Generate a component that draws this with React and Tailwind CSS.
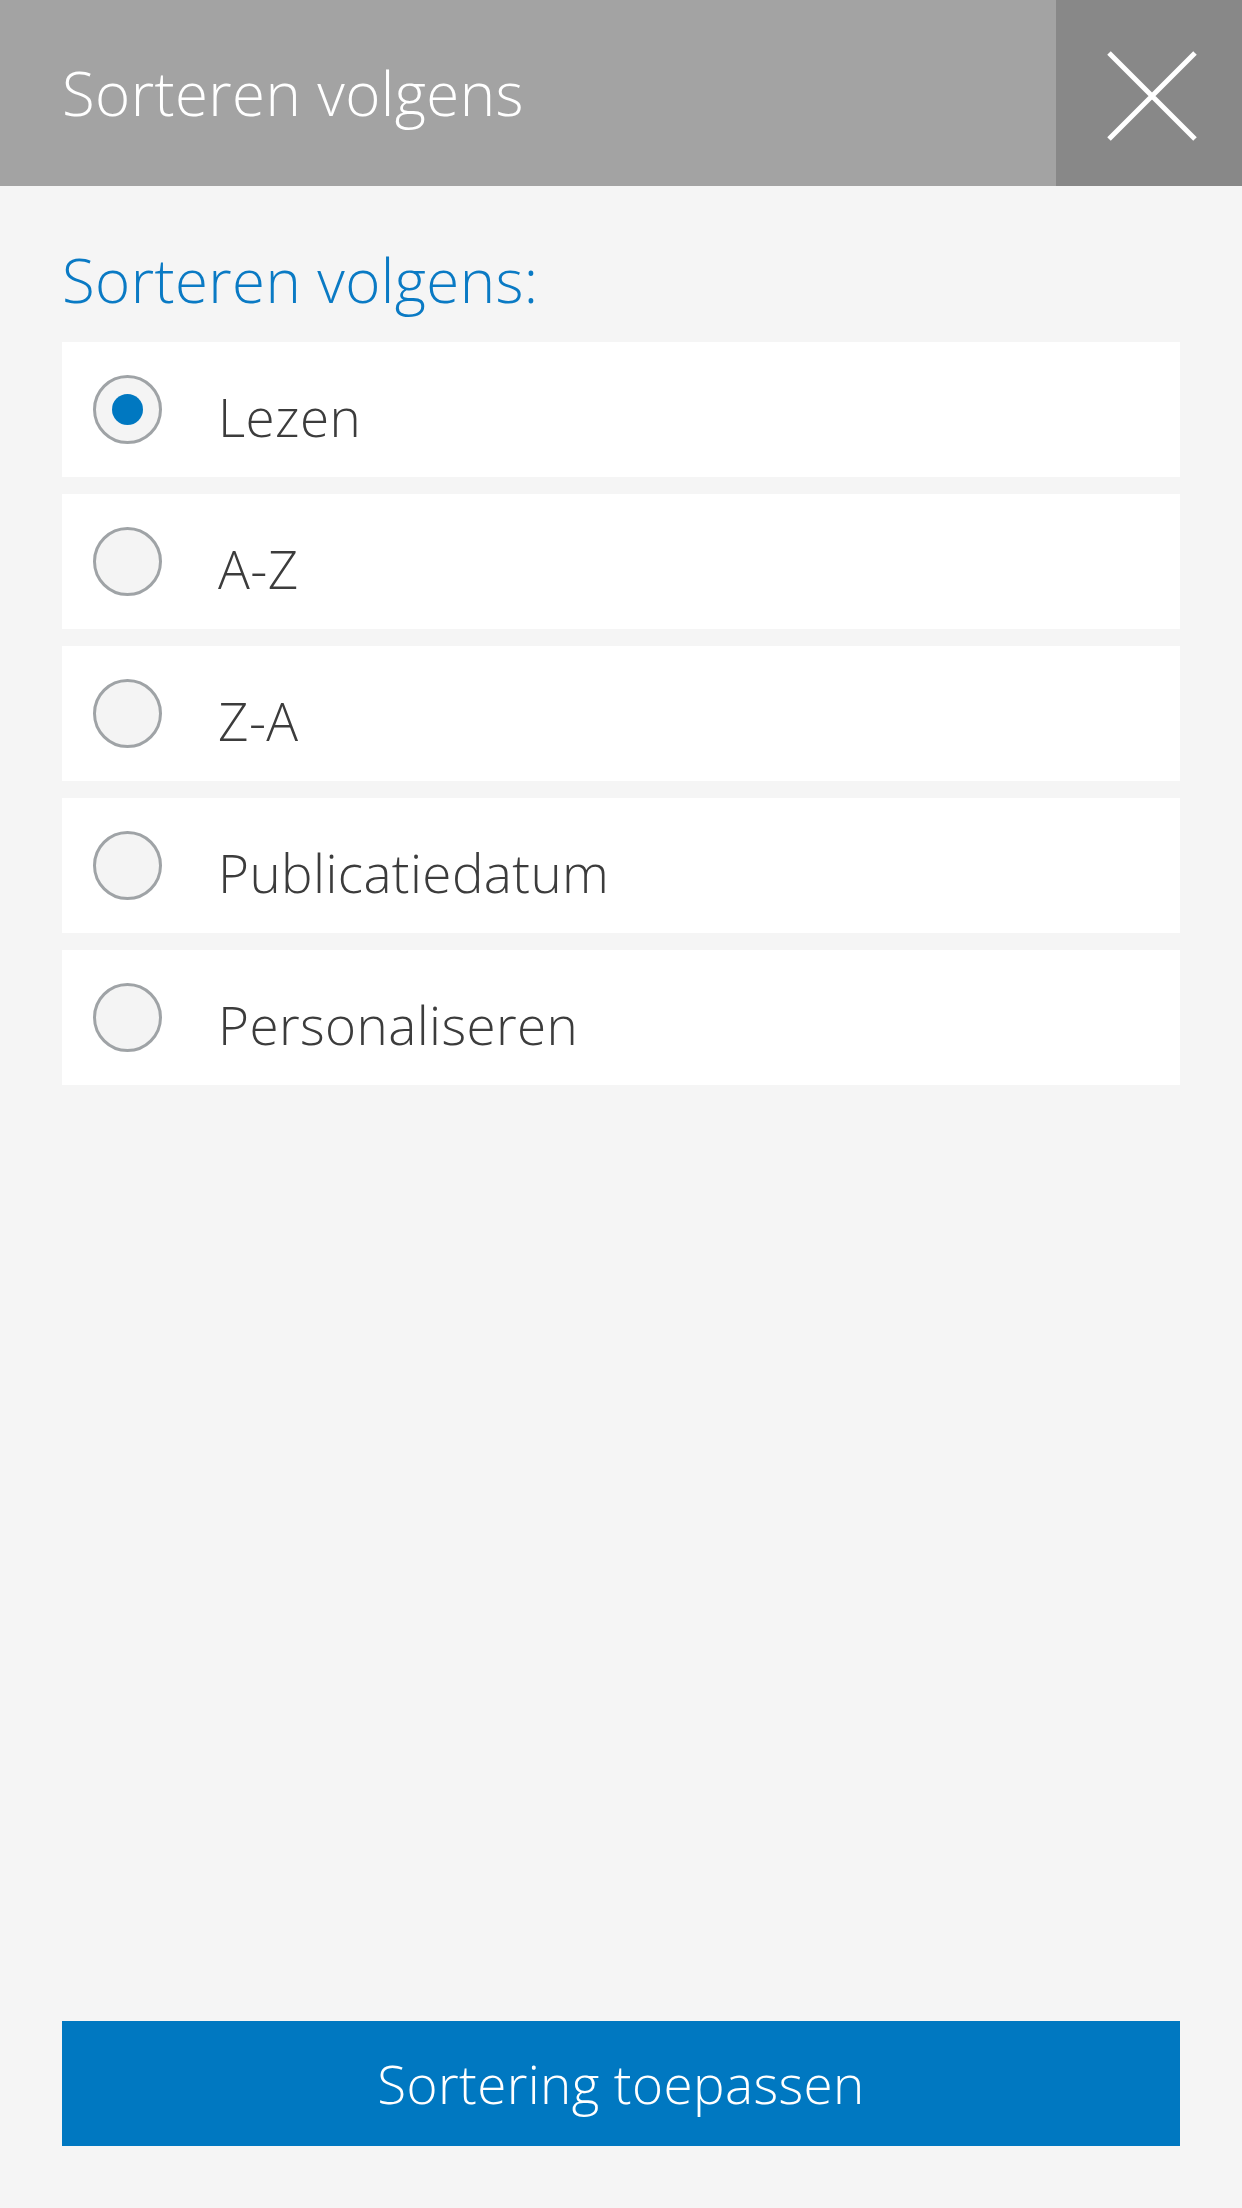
import React, { useState } from "react";

const options = ["Lezen", "A-Z", "Z-A", "Publicatiedatum", "Personaliseren"];

const Radio = ({ checked }) => (
  <span className="flex h-[69px] w-[69px] shrink-0 items-center justify-center rounded-full border-[3px] border-[#9fa3a6] bg-[#f4f4f4]">
    {checked && <span className="h-[31px] w-[31px] rounded-full bg-[#0078c1]" />}
  </span>
);

const App = () => {
  const [selected, setSelected] = useState("Lezen");

  return (
    <div
      className="flex min-h-[2208px] flex-col bg-[#f5f5f5] font-light tracking-[0.025em]"
      style={{ fontFamily: '"Open Sans", "Liberation Sans", sans-serif' }}
    >
      <div className="flex h-[186px] items-stretch bg-[#a3a3a3]">
        <h1 className="flex flex-1 items-center pl-[62px] text-[60px] font-light text-white">
          Sorteren volgens
        </h1>
        <button className="flex w-[186px] items-center justify-center bg-[#888888] pl-[6px] pt-[6px]">
          <svg width="90" height="90" viewBox="0 0 90 90" fill="none">
            <path d="M2 2 L88 88 M88 2 L2 88" stroke="white" strokeWidth="5" />
          </svg>
        </button>
      </div>

      <div className="flex flex-1 flex-col px-[62px]">
        <h2 className="mt-[62px] mb-[30px] text-[60px] leading-[64px] font-light text-[#0a7ac4]">
          Sorteren volgens:
        </h2>
        <div className="flex flex-col gap-[17px]">
          {options.map((opt) => (
            <button
              key={opt}
              onClick={() => setSelected(opt)}
              className="flex h-[135px] items-center bg-white pl-[31px] text-left"
            >
              <Radio checked={selected === opt} />
              <span className="ml-[56px] pt-[14px] text-[53px] leading-[64px] text-[#3c3c3c]">{opt}</span>
            </button>
          ))}
        </div>

        <div className="flex-1" />

        <button className="mb-[62px] h-[125px] w-full bg-[#0078c1] text-[53px] font-light text-white">
          Sortering toepassen
        </button>
      </div>
    </div>
  );
};

export default App;
